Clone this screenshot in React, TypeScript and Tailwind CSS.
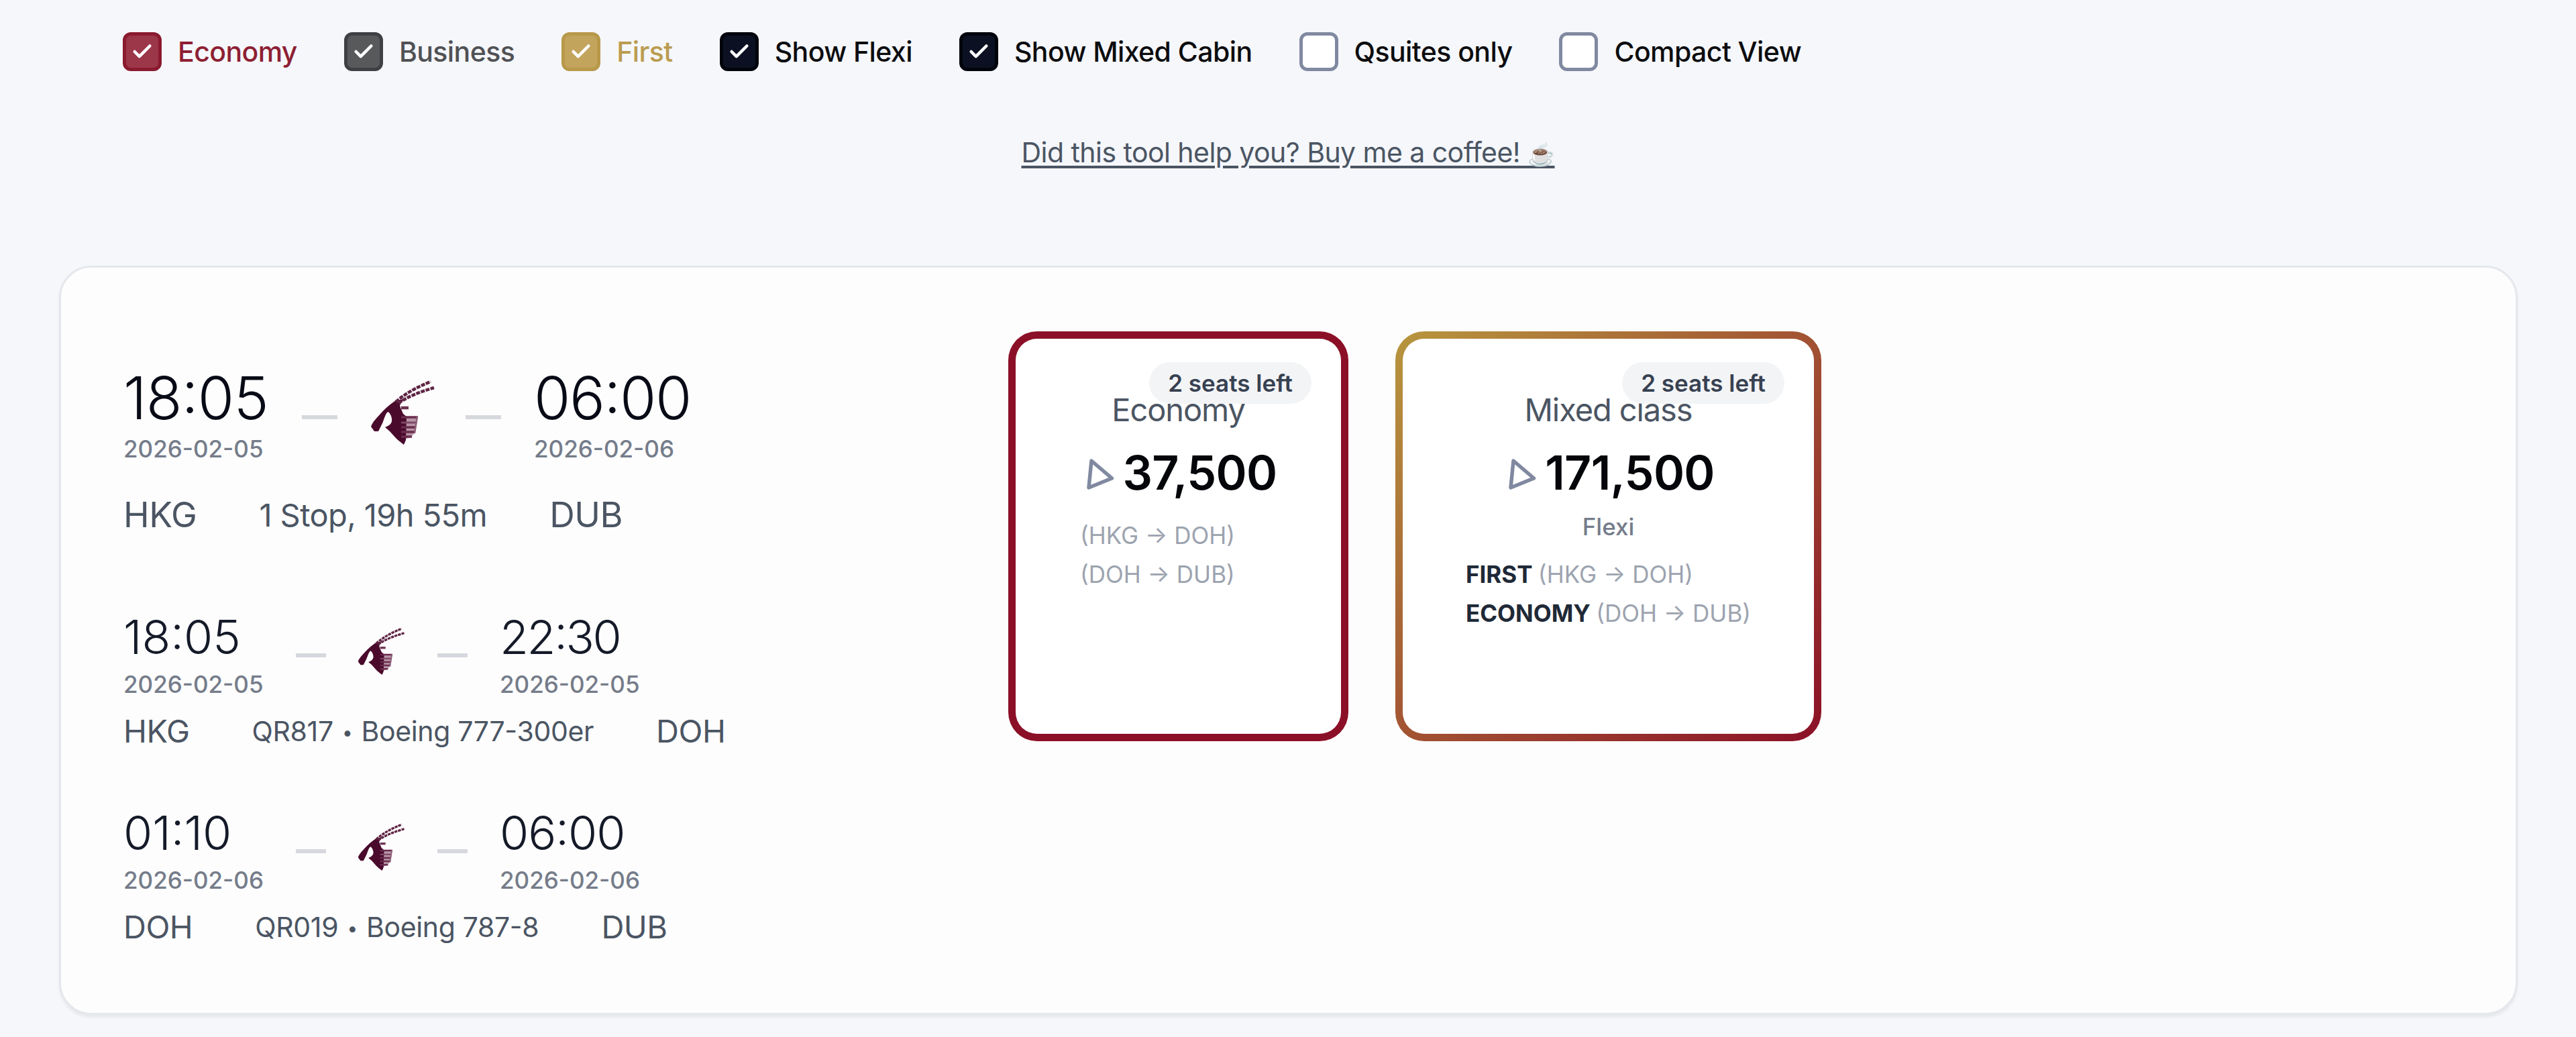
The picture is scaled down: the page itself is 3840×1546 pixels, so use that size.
import { Check } from 'lucide-react'

interface leg {
  from: string
  to: string
  cabin?: string
}

interface fare {
  name: string
  price: string
  seats: string
  flexi?: boolean
  width: string
  border: string
  legs: Array<leg>
}

interface segment {
  depart: string
  departDate: string
  arrive: string
  arriveDate: string
  arriveTracking: string
  from: string
  to: string
  flight: string
  plane: string
}

const filters = [
  { label: 'Economy', box: 'border-[#8a1a2f] bg-[#9c3649]', text: 'text-[#8e1f33]', checked: true },
  { label: 'Business', box: 'border-[#3f4043] bg-[#58595b]', text: 'text-[#505154]', checked: true },
  { label: 'First', box: 'border-[#b8994a] bg-[#c2a45c]', text: 'text-[#bb9c50]', checked: true },
  { label: 'Show Flexi', box: 'border-[#02040c] bg-[#0b1122]', text: 'text-[#0c0c0e]', checked: true },
  { label: 'Show Mixed Cabin', box: 'border-[#02040c] bg-[#0b1122]', text: 'text-[#0c0c0e]', checked: true },
  { label: 'Qsuites only', box: 'border-[#8089a0] bg-white', text: 'text-[#0c0c0e]', checked: false },
  { label: 'Compact View', box: 'border-[#8089a0] bg-white', text: 'text-[#0c0c0e]', checked: false },
]

const segments: Array<segment> = [
  {
    depart: '18:05',
    departDate: '2026-02-05',
    arrive: '22:30',
    arriveDate: '2026-02-05',
    arriveTracking: 'tracking-[-2.4px]',
    from: 'HKG',
    to: 'DOH',
    flight: 'QR817',
    plane: 'Boeing 777-300er',
  },
  {
    depart: '01:10',
    departDate: '2026-02-06',
    arrive: '06:00',
    arriveDate: '2026-02-06',
    arriveTracking: 'tracking-[-1px]',
    from: 'DOH',
    to: 'DUB',
    flight: 'QR019',
    plane: 'Boeing 787-8',
  },
]

const fares: Array<fare> = [
  {
    name: 'Economy',
    price: '37,500',
    seats: '2 seats left',
    width: 'w-[507px]',
    border: 'bg-[#8b1027]',
    legs: [
      { from: 'HKG', to: 'DOH' },
      { from: 'DOH', to: 'DUB' },
    ],
  },
  {
    name: 'Mixed class',
    price: '171,500',
    seats: '2 seats left',
    flexi: true,
    width: 'w-[635px]',
    border: 'bg-linear-135/srgb from-[#b8963e] to-[#8b1027]',
    legs: [
      { cabin: 'FIRST', from: 'HKG', to: 'DOH' },
      { cabin: 'ECONOMY', from: 'DOH', to: 'DUB' },
    ],
  },
]

function Oryx({ className }: { className: string }) {
  return (
    <svg viewBox="0 0 97 97" className={className} fill="none">
      <path d="M46 55 H71 L67 79 L60 86 L48 90 Z" fill="#b795a6" />
      <path
        d="M1 70 C4 62 9 58 15 51 C21 44 28 38 38 31 L50 29 L44 38 C45 43 47 46 49 51 L54 55 L53 90 L50 97 C46 94 41 90 38 87 L29 77 L22 71 C30 68 33 64 32 58 C31 53 29 49 26 48 C22 52 21 58 18 65 L12 77 L6 77 Z"
        fill="#4a0a2c"
      />
      <path d="M38 33 C53 20 70 11 90 3" stroke="#5f2443" strokeWidth="4.5" strokeDasharray="6 1.5" />
      <path d="M42 35 C58 24 75 18 95 12" stroke="#5f2443" strokeWidth="4.5" strokeDasharray="6 1.5" />
      <path d="M46 42 H57" stroke="#6d3352" strokeWidth="4.5" />
      <path d="M46 56 H71 M46 71 H67 M46 78 H67 M46 85 H62" stroke="#6a2c4d" strokeWidth="3.5" />
      <path d="M46 64 H69" stroke="#7d4965" strokeWidth="3" />
      <path d="M70 55 L66 80" stroke="#8d5f77" strokeWidth="2.5" />
    </svg>
  )
}

function Dash({ className }: { className: string }) {
  return <div className={`h-[6px] bg-[#d6d8de] ${className}`} />
}

function DateText({ children }: { children: string }) {
  return <p className="text-[35px] leading-[46px] font-medium whitespace-nowrap text-[#757c8a]">{children}</p>
}

function Filters() {
  return (
    <div className="flex h-[60px] items-center gap-[70px] pl-[183px]">
      {filters.map((f) => (
        <label key={f.label} className="flex items-center gap-[24px]">
          <span className={`flex size-[58px] items-center justify-center rounded-[12px] border-[5px] ${f.box}`}>
            {f.checked && <Check className="size-[34px] text-white" strokeWidth={3.2} />}
          </span>
          <span className={`text-[41px] leading-[58px] font-medium tracking-[-0.58px] ${f.text}`}>{f.label}</span>
        </label>
      ))}
    </div>
  )
}

function Summary() {
  return (
    <div>
      <div className="flex h-[151px]">
        <div className="w-[218px]">
          <p className="text-[88px] leading-[105px] font-light tracking-[-0.8px] text-[#080b16]">18:05</p>
          <DateText>2026-02-05</DateText>
        </div>
        <Dash className="mt-[78px] ml-[48px] w-[53px]" />
        <Oryx className="mt-[25px] ml-[49px] size-[97px]" />
        <Dash className="mt-[78px] ml-[45px] w-[53px]" />
        <div className="ml-[49px]">
          <p className="text-[88px] leading-[105px] font-light tracking-[-1.4px] text-[#080b16]">06:00</p>
          <DateText>2026-02-06</DateText>
        </div>
      </div>
      <div className="mt-[35px] flex items-center gap-[93px] text-[52px] leading-[82px] tracking-[-0.4px] text-[#4b5563]">
        <span>HKG</span>
        <span className="text-[47px] tracking-[-0.6px]">1 Stop, 19h 55m</span>
        <span>DUB</span>
      </div>
    </div>
  )
}

function SegmentRow({ data }: { data: segment }) {
  return (
    <div>
      <div className="flex h-[140px]">
        <div className="w-[208px]">
          <p className="text-[70px] leading-[94px] font-light text-[#141a28]">{data.depart}</p>
          <DateText>{data.departDate}</DateText>
        </div>
        <Dash className="mt-[71px] ml-[49px] w-[45px]" />
        <Oryx className="mt-[32px] ml-[47px] size-[71px]" />
        <Dash className="mt-[71px] ml-[48px] w-[45px]" />
        <div className="ml-[48px]">
          <p className={`text-[70px] leading-[94px] font-light text-[#141a28] ${data.arriveTracking}`}>{data.arrive}</p>
          <DateText>{data.arriveDate}</DateText>
        </div>
      </div>
      <div className="mt-[12px] flex h-[70px] items-center gap-[93px] text-[47px] leading-[70px] tracking-[-0.5px] text-[#4b5563]">
        <span>{data.from}</span>
        <span className="text-[41px] tracking-[-0.35px]">
          {data.flight} <span className="mx-[2px] align-[3px] text-[28px] leading-none">•</span> {data.plane}
        </span>
        <span>{data.to}</span>
      </div>
    </div>
  )
}

function FareCard({ data }: { data: fare }) {
  return (
    <div className={`h-[611px] rounded-[43px] p-[11px] ${data.width} ${data.border}`}>
      <div className="relative flex h-full flex-col items-center rounded-[32px] bg-white pt-[71px]">
        <span className="absolute top-[35px] right-[44px] flex h-[62px] w-[242px] items-center justify-center rounded-full bg-[#f3f4f6] text-[35px] font-semibold text-[#374151]">
          {data.seats}
        </span>
        <p className="text-[47px] leading-[70px] tracking-[-1.1px] text-[#4b5563]">{data.name}</p>
        <div className="mt-[12px] flex h-[94px] items-center gap-[12px] pl-[8px]">
          <svg viewBox="0 0 44 50" className="mt-[4px] h-[50px] w-[44px]" fill="none">
            <path d="M9 5 L39.5 31 L5 45 Z" stroke="#8089a0" strokeWidth="5.5" strokeLinejoin="round" />
          </svg>
          <span className="text-[70px] leading-[94px] font-semibold tracking-[-0.7px] text-[#05060a]">{data.price}</span>
        </div>
        {data.flexi && <p className="mt-[10px] text-[35px] leading-[46px] font-medium text-[#757c8a]">Flexi</p>}
        <div className={data.flexi ? 'mt-[25px]' : 'mt-[23px] mr-[62px]'}>
          {data.legs.map((l) => (
            <p key={l.from} className="mb-[11px] text-[35px] leading-[47px] text-[#9ca3af]">
              {l.cabin && <span className="font-bold text-[#1f2937]">{l.cabin} </span>}({l.from} → {l.to})
            </p>
          ))}
        </div>
      </div>
    </div>
  )
}

export default function App() {
  return (
    <div className="h-[1546px] w-[3840px] overflow-hidden bg-[#f5f7fb] pt-[47px] font-['Inter',sans-serif] [font-feature-settings:'calt'_1]">
      <Filters />
      <div className="mt-[90px] flex h-[60px] items-center justify-center">
        <a className="text-[41px] leading-[60px] tracking-[-0.55px] text-[#4b5563] underline decoration-[4px] underline-offset-[5px]">
          Did this tool help you? Buy me a coffee! <span className="text-[33px] leading-none">☕</span>
        </a>
      </div>
      <div className="mt-[139px] ml-[88px] flex h-[1117px] w-[3665px] rounded-[48px] border-[3px] border-[#e6e7ec] bg-[#fdfdfd] pt-[142px] pl-[93px] shadow-[0_4px_4px_rgba(0,0,0,0.06)]">
        <div className="w-[1319px]">
          <Summary />
          <div className="mt-[94px] flex flex-col gap-[70px]">
            {segments.map((s) => (
              <SegmentRow key={s.flight} data={s} />
            ))}
          </div>
        </div>
        <div className="-mt-[47px] flex items-start gap-[70px]">
          {fares.map((f) => (
            <FareCard key={f.name} data={f} />
          ))}
        </div>
      </div>
    </div>
  )
}
